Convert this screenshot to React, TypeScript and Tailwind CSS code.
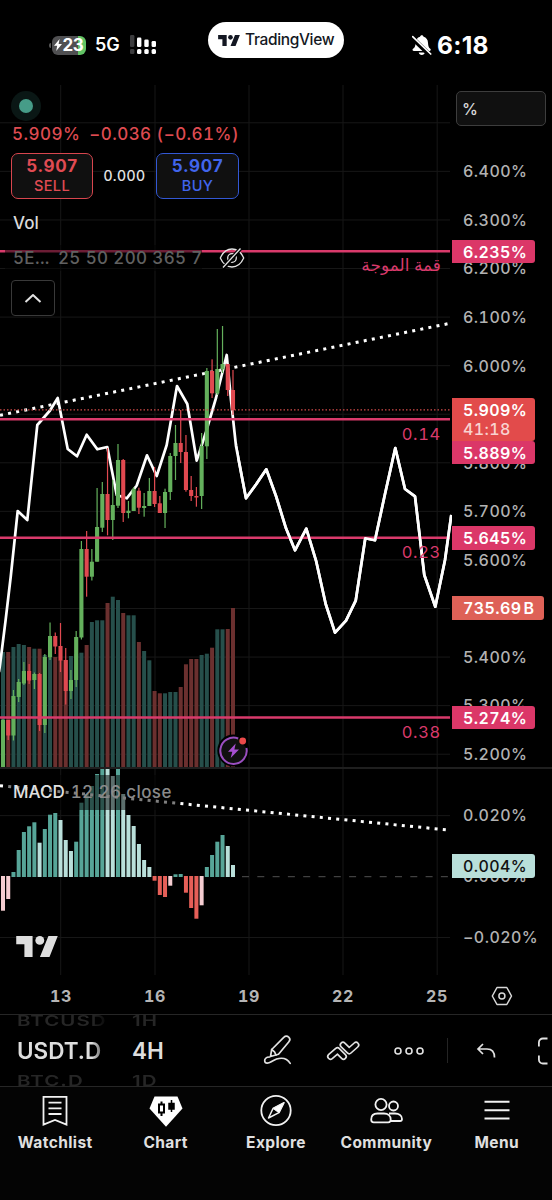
import React from "react";

type Candle = [open: 0 | 1, top: number, bottom: number, high: number, low: number];

const PITCH = 5.227;
const barX = (i: number) => 3 + i * PITCH;

// [isUp, bodyTop, bodyBottom, high, low]
const candles: Candle[] = [
  [1, 720, 767.5, 719, 767.5], [0, 720, 735.5, 720, 740], [1, 696, 735.5, 690, 740.5],
  [1, 682, 697, 679, 702], [1, 671, 683.5, 662, 685], [0, 671, 680.5, 664, 684],
  [1, 674, 680, 672.5, 689], [0, 674, 725, 673, 731], [1, 657, 725, 654, 733],
  [1, 636, 657.5, 622.5, 660], [0, 636, 646.5, 632.5, 654], [0, 646, 660.5, 623, 672],
  [0, 660, 691, 648, 704.5], [1, 680, 691, 670, 699], [1, 637, 680, 631, 687],
  [1, 549, 637.5, 541, 639.5], [0, 549, 576.7, 531, 596.7], [1, 561.7, 576.7, 549, 580.5],
  [1, 527, 561.7, 488, 561.7], [1, 494, 527.7, 482, 532], [0, 494, 520, 448, 535.3],
  [1, 505, 520, 480, 540], [1, 460, 505.7, 444, 508], [0, 460, 513, 459, 522],
  [1, 510.7, 513, 501, 518.3], [1, 489, 511, 487, 511], [0, 490.7, 507.7, 487.7, 514],
  [1, 506, 508, 493, 516.7], [1, 491, 506, 478, 506], [0, 491, 504, 467, 507],
  [0, 503.3, 513, 496, 513], [1, 492, 513, 488.7, 528], [1, 456, 492, 453, 500],
  [1, 443, 456, 425, 480], [0, 443, 452, 410, 463], [0, 452, 490, 435, 491.7],
  [0, 490, 496, 476, 501], [0, 496, 497.5, 487, 506.7], [1, 446, 496, 433, 509],
  [1, 371, 446.3, 368, 459], [0, 371, 393.3, 359.3, 398], [1, 369, 393.3, 329, 395],
  [1, 364, 369.3, 326, 373], [0, 364, 390, 364, 396], [0, 390, 410, 370, 415],
];

// volume: [isUp, top]
const volumes: [0 | 1, number][] = [
  [1, 652], [0, 652], [1, 647], [1, 644], [1, 645], [0, 647], [1, 648.7], [0, 648.7], [1, 655],
  [1, 658], [0, 657], [0, 660], [0, 660], [1, 656], [1, 654], [1, 652.7], [0, 645], [1, 622],
  [1, 620.3], [1, 620.3], [0, 603], [1, 596.7], [1, 600], [0, 613], [1, 615.3], [1, 615.3],
  [0, 642], [1, 651], [1, 660.3], [0, 691], [0, 693.3], [1, 693.3], [1, 692], [1, 692],
  [0, 687], [0, 664.3], [0, 659], [0, 659], [1, 655], [1, 653.7], [0, 647.7], [1, 629.3],
  [1, 629.3], [0, 629], [0, 608],
];

type Tone = "up" | "upFade" | "down" | "downFade";
const toneFill: Record<Tone, string> = {
  up: "#57a598", upFade: "#b9dfda", down: "#e65f58", downFade: "#f5cdd1",
};
const ZERO = 877;
const macd: [Tone, number][] = [
  ["downFade", 910.7], ["downFade", 899], ["up", 872], ["up", 850], ["up", 832], ["up", 826.3],
  ["up", 822.3], ["upFade", 842.7], ["up", 829], ["up", 814.7], ["up", 813], ["upFade", 820],
  ["upFade", 840], ["upFade", 851], ["up", 841.7], ["up", 802.7], ["up", 794], ["up", 786],
  ["up", 774], ["up", 769], ["upFade", 769], ["upFade", 776], ["up", 769], ["upFade", 794],
  ["upFade", 815], ["upFade", 826], ["upFade", 844], ["upFade", 860], ["upFade", 867],
  ["down", 880.7], ["down", 895], ["down", 897], ["downFade", 885.7], ["up", 874.3],
  ["up", 874], ["down", 892.7], ["down", 908], ["down", 918.7], ["downFade", 905.3],
  ["up", 867], ["up", 855], ["up", 841.7], ["up", 835], ["upFade", 846], ["upFade", 865],
];

const waveLine =
  "M-1 672 L0 665 L5.5 621 L10.7 577 L17.7 511 L27.3 520 L37.3 425 L50 410.5 L57.7 398 L67.7 449 L77 456.3 L86.7 434.7 L97.3 449.3 L107.3 447 L116.7 495 L126.7 498.3 L136.7 485.5 L147 455.3 L156.7 476 L166.7 445 L177 386 L187.3 404 L196.7 460.7 L206 432 L216 398 L226.7 355 L231 400 L236 446 L246 498.3 L256 484.5 L266.3 469.3 L276 496 L286 528.3 L295 550.3 L306.3 528.7 L316.3 561.7 L325.7 604 L335 632.7 L346 620.7 L355.7 600.7 L365.3 538.3 L375 540.3 L385 494 L395.3 448 L405 489 L415 496.3 L424.3 575 L435.3 606.7 L445 560 L451.3 515";

const vGrid = [60.7, 155, 249, 343, 437.2];
const hGrid = Array.from({ length: 14 }, (_, i) => 122.8 + i * 48.57);
const levels = [251.3, 419.2, 537.8, 717.5];

function TvLogo({ className }: { className?: string }) {
  return (
    <svg viewBox="0 4 35.6 18" className={className} fill="currentColor">
      <path d="M14 22H7V11H0V4h14v18zM28.5 22h-8.2L27.6 4h8z" />
      <circle cx="20.2" cy="7.8" r="3.8" />
    </svg>
  );
}

function StatusBar() {
  return (
    <header className="relative h-[85px] shrink-0">
      <div className="flex h-[90px] items-center pl-[49px]">
        <div className="h-[5px] w-[2px] rounded-l-full bg-[#555]" />
        <div className="ml-px flex h-[19px] w-[34px] items-center justify-center overflow-hidden rounded-[6px] bg-[linear-gradient(to_right,#505052_77%,#62c466_77%)]">
          <svg viewBox="0 0 8 12" className="h-[12px] w-[8px]" fill="#fff">
            <path d="M5.6 0 0 6.8h3.2L2.2 12 8 5H4.6z" />
          </svg>
          <span className="text-[17px] leading-none font-bold tracking-[-0.3px] text-white">23</span>
        </div>
        <span className="ml-[9px] w-[25px] text-[18px] leading-none font-semibold tracking-[-0.1px] text-white">5G</span>
        <svg width="28" height="20" viewBox="0 0 28 20" className="ml-[10px]" fill="#fff">
          <g fill="#3c3c3e">
            <rect x="0" y="0" width="4.4" height="12" rx="1.3" />
            <rect x="0" y="14" width="4.4" height="5" rx="1.3" />
          </g>
          <rect x="7" y="2.5" width="4.4" height="9.5" rx="1.3" />
          <rect x="14.3" y="4.5" width="4.4" height="7.5" rx="1.3" />
          <rect x="21.6" y="6" width="4.4" height="6" rx="1.3" />
          <rect x="7" y="14" width="4.4" height="5" rx="1.6" />
          <rect x="14.3" y="14" width="4.4" height="5" rx="1.6" />
          <rect x="21.6" y="14" width="4.4" height="5" rx="1.6" />
        </svg>
        <svg width="20" height="21" viewBox="0 0 20 21" className="ml-[254px]">
          <path
            fill="#fff"
            d="M9.8 0.3c.9 0 1.6.6 1.8 1.5 2.7.7 4.3 3 4.4 5.9.1 3.500.9 4.900 2.300 6.100.8.7.8 2.100-.7 2.100H1.700c-1.500 0-1.500-1.400-.7-2.100C2.600 12.600 3.500 11.200 3.600 7.700 3.700 4.800 5.300 2.500 8 1.800 8.200.9 8.900.3 9.800.3zM6.700 17.500h6.200c-.3 1.500-1.600 2.500-3.100 2.500s-2.800-1-3.100-2.500z"
          />
          <path d="M0 2.700 18.200 20.300" stroke="#000" strokeWidth="4.600" />
          <path d="M.7 1.700 18.700 19" stroke="#fff" strokeWidth="1.700" strokeLinecap="round" />
        </svg>
        <span className="ml-[5px] pt-px text-[24.5px] leading-none font-bold tracking-[0.3px] text-white">6:18</span>
      </div>
      <div className="absolute top-[22px] left-[208px] flex h-[36px] w-[136px] items-center rounded-full bg-white pl-[10px]">
        <TvLogo className="h-[11px] w-[22px] text-[#131722]" />
        <span className="ml-[5px] text-[15.5px] leading-none font-medium tracking-[-0.35px] text-[#131722]">TradingView</span>
      </div>
    </header>
  );
}

function Plot() {
  return (
    <svg width="452" height="890" viewBox="0 85 452 890" className="block">
      <g stroke="#171717" strokeWidth="1">
        {vGrid.map((x) => <path key={x} d={`M${x} 85V975`} />)}
        {hGrid.map((y) => <path key={y} d={`M0 ${y}H450`} />)}
        <path d="M0 815.6H450M0 937.5H450" />
      </g>

      <path d="M242 876.700H448" stroke="#505050" strokeWidth="1" strokeDasharray="7 8.300" />

      {volumes.map(([up, top], i) => (
        <rect key={i} x={barX(i) - 2} y={top} width="4" height={767 - top} fill={up ? "#264f4b" : "#6b302f"} />
      ))}

      <path d="M0 415.300 450 323.300" stroke="#fff" strokeWidth="3" strokeDasharray="3 5.250" />
      <path d={waveLine} fill="none" stroke="#fff" strokeWidth="2.700" strokeLinejoin="round" />

      {candles.map(([up, top, bottom, high, low], i) => (
        <g key={i} fill={up ? "#64b05c" : "#e04950"}>
          <rect x={barX(i) - 0.600} y={high} width="1.200" height={low - high} />
          <rect x={barX(i) - 2.050} y={top} width="4.100" height={bottom - top} />
        </g>
      ))}

      <path d="M0 409.900H451" stroke="#cf4a48" strokeWidth="1.400" strokeDasharray="1.500 2" />
      <g stroke="#d93a6b" strokeWidth="2.500">
        {levels.map((y) => <path key={y} d={`M0 ${y}H450`} />)}
      </g>
      <clipPath id="future"><rect x="237" y="425" width="215" height="220" /></clipPath>
      <path d={waveLine} fill="none" stroke="#fff" strokeWidth="2.700" strokeLinejoin="round" clipPath="url(#future)" />

      <rect x="0" y="767" width="452" height="2" fill="#1f1f1f" />
      {macd.map(([tone, y], i) => (
        <rect key={i} x={barX(i) - 2} y={Math.min(y, 876)} width="4" height={y < ZERO ? ZERO - y : y - 876} fill={toneFill[tone]} />
      ))}
      <path d="M0 785.700 448 830" stroke="#fff" strokeWidth="3" strokeDasharray="3 5.240" />

      <g>
        <circle cx="233.300" cy="750.500" r="16" fill="#000" />
        <path d="M238.200 738.500A13.200 13.200 0 1 0 246.400 748" fill="#101010" stroke="#9a4fc0" strokeWidth="2" />
        <path d="M235.700 743.500 228 751.800h4.300l-1.600 6.200 8.300-8.600h-4.600z" fill="#a64fd0" />
        <circle cx="242.700" cy="741" r="3.400" fill="#ec4a4a" />
      </g>
    </svg>
  );
}

function LevelLabel({ className, children }: { className: string; children: React.ReactNode }) {
  return (
    <span className={`absolute right-[11px] leading-none text-[#d93a6b] ${className}`}>{children}</span>
  );
}

function Legend() {
  return (
    <div className="absolute top-[6px] left-0 flex w-[260px] flex-col items-start">
      <div className="ml-[11px] flex size-[30px] items-center justify-center rounded-full bg-[#0a1715]">
        <div className="size-[14px] rounded-full bg-[#469c88]" />
      </div>
      <div className="mt-[3px] ml-[12px] flex h-[20px] items-center gap-[9px] text-[17px] leading-none font-medium tracking-[0.45px] whitespace-nowrap tabular-nums text-[#de4b51]">
        <span>5.909%</span>
        <span>−0.036 (−0.61%)</span>
      </div>
      <div className="mt-[9px] ml-[11px] flex h-[46px] items-center">
        <div className="flex h-[46px] w-[82px] flex-col items-center justify-center rounded-[7px] border border-[#d8464e] bg-[#101010] text-[#e04b53]">
          <span className="text-[17px] leading-[19px] font-bold tracking-[0.7px]">5.907</span>
          <span className="text-[14.5px] leading-[20px] font-medium tracking-[0.4px]">SELL</span>
        </div>
        <span className="w-[63px] text-center text-[14px] leading-none font-medium tracking-[0.5px] text-[#e2e2e2]">0.000</span>
        <div className="flex h-[46px] w-[83px] flex-col items-center justify-center rounded-[7px] border border-[#3358d4] bg-[#101010] text-[#4165ec]">
          <span className="text-[17px] leading-[19px] font-bold tracking-[0.7px]">5.907</span>
          <span className="text-[14.5px] leading-[20px] font-medium tracking-[0.4px]">BUY</span>
        </div>
      </div>
      <span className="mt-[14px] ml-[13px] text-[17px] leading-[20px] font-medium text-[#dadada]">Vol</span>
      <div className="mt-[12px] flex h-[26px] items-center">
        <div className="ml-[5px] flex h-[26px] w-[197px] items-center overflow-hidden bg-black/50 pt-px pl-[8px] text-[17px] font-medium tracking-[0.35px] whitespace-pre tabular-nums text-[#616161]">
          <span className="w-[45px] shrink-0">5E...</span>
          <span>25 50 200 365 730</span>
        </div>
        <svg width="26" height="22" viewBox="0 0 26 22" className="ml-[17px]" fill="none" stroke="#e4e4e4" strokeWidth="1.300">
          <path d="M1.300 11C4 5 8.500 2 13 2s9 3 11.700 9C22 17 17.500 20 13 20S4 17 1.300 11z" />
          <circle cx="13" cy="11" r="4.300" />
          <circle cx="13" cy="11" r="1.200" fill="#e4e4e4" />
          <path d="M4 21.500 21.500 1.500" stroke="#000" strokeWidth="4" />
          <path d="M4 20.500 21.500 1.500" />
        </svg>
      </div>
      <div className="mt-[9px] ml-[11px] flex h-[36px] w-[44px] items-center justify-center rounded-[4px] border border-[#393939]">
        <svg width="18" height="11" viewBox="0 0 18 11" fill="none" stroke="#e2e2e2" strokeWidth="2" strokeLinejoin="round">
          <path d="M1.500 9 9 2l7.500 7" />
        </svg>
      </div>
    </div>
  );
}

function Tick({ className, children }: { className: string; children: React.ReactNode }) {
  return <div className={`flex items-center ${className}`}>{children}</div>;
}

const tagBase = "absolute left-0 flex items-center rounded-r-[3px] pl-[11px] text-[16px] font-semibold tracking-[0.4px] text-white";

function PriceAxis() {
  const prices = ["6.400%", "6.300%", "6.200%", "6.100%", "6.000%", "5.900%", "5.800%", "5.700%", "5.600%", "5.500%", "5.400%", "5.300%", "5.200%"];
  return (
    <div className="relative w-[100px] shrink-0 text-[16px] font-medium tracking-[0.45px] tabular-nums text-[#b2b2b2]">
      <div className="h-[684px] overflow-hidden border-b-2 border-[#1f1f1f]">
        <div className="mt-[6px] ml-[4px] flex h-[35px] w-[90px] items-center rounded-[5px] border border-[#3d3d3d] bg-[#101010] pl-[5px] text-[#d8d8d8]">%</div>
        <div className="mt-[21px] ml-[11px]">
          {prices.map((p) => <Tick key={p} className="h-[48.57px]">{p}</Tick>)}
        </div>
      </div>
      <div className="mt-[16px] ml-[11px]">
        {["0.020%", "0.000%", "−0.020%"].map((p) => <Tick key={p} className="h-[60.9px]">{p}</Tick>)}
      </div>
      <div className={`${tagBase} top-[155px] h-[23px] w-[83px] bg-[#db3768]`}>6.235%</div>
      <div className={`${tagBase} top-[356px] h-[23px] w-[83px] bg-[#db3768]`}>5.889%</div>
      <div className={`${tagBase} top-[313px] h-[43px] w-[83px] flex-col !items-start justify-center bg-[#e24b4b]`}>
        <span className="leading-[19px]">5.909%</span>
        <span className="leading-[19px] font-medium text-[#f8d3d0]">41:18</span>
      </div>
      <div className={`${tagBase} top-[441px] h-[24px] w-[83px] bg-[#db3768]`}>5.645%</div>
      <div className={`${tagBase} top-[511px] h-[24px] w-[92px] bg-[#de6157]`}>735.69<span className="ml-[2px]">B</span></div>
      <div className={`${tagBase} top-[621px] h-[23px] w-[83px] bg-[#db3768]`}>5.274%</div>
      <div className={`${tagBase} top-[769px] h-[24px] w-[83px] bg-[#b9dfda] !font-medium !text-[#111]`}>0.004%</div>
    </div>
  );
}

function TimeAxis() {
  return (
    <div className="flex h-[40px] shrink-0 items-center border-b border-[#262626] pt-[3px] pl-[14px]">
      {["13", "16", "19", "22", "25"].map((d) => (
        <span key={d} className="w-[94px] text-center text-[16px] leading-none font-bold tracking-[0.6px] tabular-nums text-[#b5b5b5]">{d}</span>
      ))}
      <svg width="22" height="20" viewBox="0 0 22 20" className="ml-[7px]" fill="none" stroke="#d8d8d8" strokeWidth="1.500" strokeLinejoin="round">
        <path d="M6 1.500h9.800l4.700 8.500-4.700 8.500H6L1.300 10z" />
        <circle cx="10.900" cy="10" r="3" />
      </svg>
    </div>
  );
}

function Wheel({ prev, current, next, className }: { prev: string; current: string; next: string; className: string }) {
  return (
    <div className={`flex h-[71px] flex-col justify-center overflow-hidden leading-none font-semibold whitespace-nowrap ${className}`}>
      <div className="flex h-[28px] shrink-0 origin-left scale-y-[0.7] items-center text-[20.5px] tracking-[1px] text-[#262626]">{prev}</div>
      <div className="flex h-[32px] shrink-0 items-center pt-[2px] text-[22.5px] text-[#dedede]">{current}</div>
      <div className="flex h-[28px] shrink-0 origin-left scale-y-[0.7] items-center text-[20.5px] tracking-[1px] text-[#262626]">{next}</div>
    </div>
  );
}

function Toolbar() {
  return (
    <div className="flex h-[72px] shrink-0 items-center overflow-hidden border-b border-[#262626] pl-[17px]">
      <Wheel prev="BTCUSD" current="USDT.D" next="BTC.D" className="w-[92px] [mask-image:linear-gradient(to_right,#000_75px,transparent_94px)]" />
      <Wheel prev="1H" current="4H" next="1D" className="ml-[23px] w-[50px]" />
      <svg width="32" height="34" viewBox="0 0 32 34" className="ml-[80px] shrink-0" fill="none" stroke="#e2e2e2" strokeWidth="1.700" strokeLinejoin="round" strokeLinecap="round">
        <path d="M9.700 15.500 22 3.200a3.100 3.100 0 0 1 4.700 0 3.200 3.200 0 0 1 .2 4.500L16.500 20.300 8.500 22.500z" />
        <path d="M9.700 15.500l2.800 2.300L14 21" />
        <path d="M7.500 23c-3.500 0-5 2-4.800 4 .3 3 3.800 2.400 6.500.8 6.500-4 14.500-5.500 19 1.600" />
      </svg>
      <svg width="34" height="24" viewBox="0 0 34 24" className="ml-[32px] shrink-0" fill="none" strokeLinejoin="round" strokeLinecap="round">
        <path d="M4.500 17.500 11.500 11.500 17.500 17.500" stroke="#e2e2e2" strokeWidth="7" />
        <path d="M4.500 17.500 11.500 11.500 17.500 17.500" stroke="#000" strokeWidth="3.700" />
        <path d="M17 6 23.200 12 30 6" stroke="#e2e2e2" strokeWidth="7" />
        <path d="M17 6 23.200 12 30 6" stroke="#000" strokeWidth="3.700" />
      </svg>
      <svg width="30" height="10" viewBox="0 0 30 10" className="ml-[34px] shrink-0" fill="none" stroke="#e2e2e2" strokeWidth="1.600">
        <circle cx="4" cy="5" r="3" />
        <circle cx="15" cy="5" r="3" />
        <circle cx="26" cy="5" r="3" />
      </svg>
      <div className="ml-[23px] h-[25px] w-px shrink-0 bg-[#242424]" />
      <svg width="20" height="16" viewBox="0 0 20 16" className="ml-[28px] shrink-0" fill="none" stroke="#e2e2e2" strokeWidth="1.700">
        <path d="M7 1 2 6l5 5M2 6h9c5 0 7.500 3 7.500 8.500" />
      </svg>
      <svg width="12" height="28" viewBox="0 0 12 28" className="ml-[41px] shrink-0" fill="none" stroke="#e2e2e2" strokeWidth="1.800">
        <path d="M1.900 9.500V5.500a4 4 0 0 1 4-4H10.500M1.900 18.500v4a4 4 0 0 0 4 4H10.500" />
      </svg>
    </div>
  );
}

function NavItem({ label, children }: { label: string; children: React.ReactNode }) {
  return (
    <div className="flex flex-1 basis-0 flex-col items-center">
      <svg width="34" height="34" viewBox="0 0 34 34" fill="none" stroke="#f2f2f2" strokeWidth="1.800">{children}</svg>
      <span className="mt-[6px] text-[15.5px] leading-[20px] font-bold tracking-[0.4px] text-[#e0e0e0]">{label}</span>
    </div>
  );
}

function BottomNav() {
  return (
    <nav className="flex flex-1 bg-[#040404] pt-[6px]">
      <NavItem label="Watchlist">
        <path d="M5.500 3.900h23v27.800L17 27 5.500 31.700z" />
        <path d="M10.500 9.600h13M10.500 15.300h13M10.500 21h13" />
      </NavItem>
      <NavItem label="Chart">
        <path d="M5.500 3.500h23l5 12L17 33.800.5 15.500z" fill="#fff" stroke="none" />
        <path d="M10 11.500h5v8h-5zM12.500 8.500v3M12.500 19.500v3.500" stroke="#000" strokeWidth="2" />
        <path d="M20 10.500h5v5.500h-5zM22.500 7v12" stroke="#000" strokeWidth="1.500" fill="#000" />
      </NavItem>
      <NavItem label="Explore">
        <circle cx="17" cy="17.500" r="14.700" />
        <path d="M9.500 25 14 15.500 25 9.700 20 19.700z" strokeWidth="1.500" strokeLinejoin="round" />
        <path d="M14 15.500 25 9.700 20 19.700z" fill="#fff" strokeWidth="1" />
      </NavItem>
      <NavItem label="Community">
        <ellipse cx="12" cy="11.500" rx="5.600" ry="5.600" />
        <circle cx="24.500" cy="13" r="4.500" />
        <path d="M2.200 26.500C2.200 22.500 5 20.500 8.500 20.500h6.500c4 0 6.700 2.300 6.700 6 0 2-.8 2.900-2.500 2.900H4.700c-1.700 0-2.500-.9-2.500-2.900zM20 20.500h6c4 0 7 2.100 7 5.400 0 1.300-.7 2.100-2 2.100h-9" />
      </NavItem>
      <NavItem label="Menu">
        <path d="M4.500 8.800h25M4.500 17.200h25M4.500 25.600h25" strokeWidth="2" />
      </NavItem>
    </nav>
  );
}

export default function App() {
  return (
    <div className="flex h-[1200px] w-[552px] flex-col overflow-hidden bg-black font-['Inter','Noto_Sans',sans-serif]">
      <StatusBar />
      <main className="flex h-[890px] shrink-0">
        <div className="relative w-[452px] shrink-0 overflow-hidden">
          <Plot />
          <LevelLabel className="top-[171px] font-['Noto_Sans','DejaVu_Sans',sans-serif] text-[17px]">قمة الموجة</LevelLabel>
          <LevelLabel className="top-[341px] text-[16.5px] tracking-[0.7px] tabular-nums">0.14</LevelLabel>
          <LevelLabel className="top-[459px] text-[16.5px] tracking-[0.7px] tabular-nums">0.23</LevelLabel>
          <LevelLabel className="top-[639px] text-[16.5px] tracking-[0.7px] tabular-nums">0.38</LevelLabel>
          <Legend />
          <div className="absolute top-[690px] left-[8px] flex h-[35px] w-[169px] items-center gap-[6px] bg-black/50 pl-[5px] text-[17px] font-medium whitespace-nowrap tabular-nums">
            <span className="text-[#e0e0e0]">MACD</span>
            <span className="tracking-[0.4px] text-[#8a8a8a]">12 26 close</span>
          </div>
          <TvLogo className="absolute top-[851px] left-[16px] h-[21px] w-[42px] text-[#dedede]" />
        </div>
        <PriceAxis />
      </main>
      <TimeAxis />
      <Toolbar />
      <BottomNav />
    </div>
  );
}
